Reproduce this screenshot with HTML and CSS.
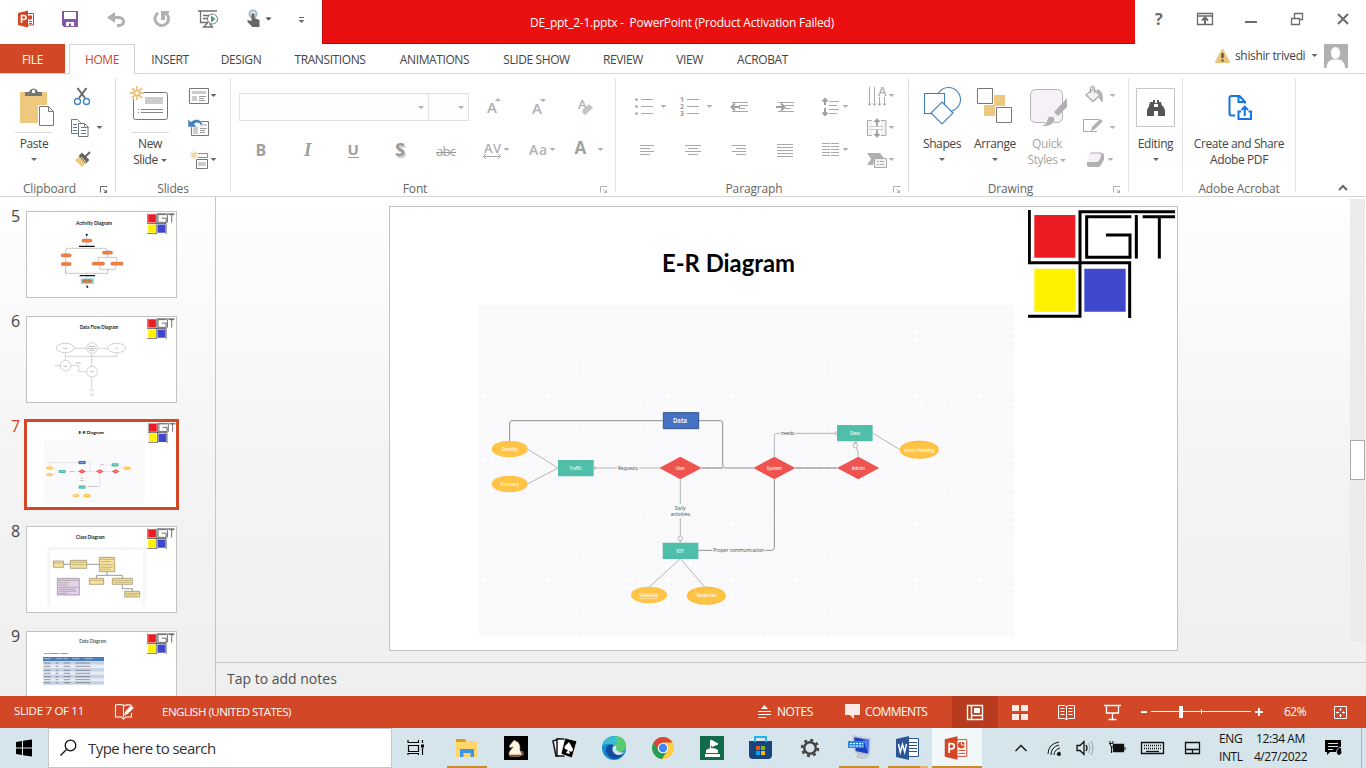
FILE: index.html
```html
<!DOCTYPE html>
<html lang="en">
<head>
<meta charset="utf-8">
<title>DE_ppt_2-1.pptx - PowerPoint</title>
<link rel="stylesheet" href="styles.css">
</head>
<body>
<svg class="defs" width="0" height="0">
  <defs>
    <path id="dd" d="M0 0h6l-3 3z"/>
    <path id="star" d="M0-7V-3M0 3V7M-7 0H-3M3 0H7M-5-5L-2-2M2 2L5 5M5-5L2-2M-2 2L-5 5M-2.500 0a2.500 2.500 0 1 0 5 0a2.500 2.500 0 1 0-5 0" fill="none" stroke="#ecc57c" stroke-width="1.800"/>
    <g id="launch" fill="none" stroke="currentColor"><path d="M.5 6.500V.5H7M3.500 3.500L6 6"/><path d="M7 3.500V7H3.500z" fill="currentColor" stroke="none"/></g>
    <pattern id="dots" x="1004" y="307" width="7.080" height="7.080" patternUnits="userSpaceOnUse"><circle cx=".8" cy=".8" r=".7" fill="#efeff3"/></pattern>
    <symbol id="logo" viewBox="84 30 441 323" preserveAspectRatio="none">
      <path d="M103 45h123v128H103z" fill="#ed1c24"/><path d="M103 206h124v128H103z" fill="#fff200"/><path d="M253 206h124v128H253z" fill="#3f48cc"/>
      <path d="M88 30V188H389V353M84 348H240V35H525M394 50H260V171H390V105H318M409 45V175M428 50H525M478 50V175" fill="none" stroke="#000" stroke-width="9"/>
    </symbol>
    <symbol id="er" viewBox="390 207 787 443">
      <rect x="390" y="207" width="787" height="443" fill="#fff"/>
      <text x="662" y="272" textLength="133" lengthAdjust="spacingAndGlyphs" class="slide-title">E-R Diagram</text>
      <rect x="478" y="305" width="536" height="331" fill="#fafafc"/><rect x="478" y="305" width="536" height="331" fill="url(#dots)"/>
      <g transform="translate(470 395) scale(.33333)">
        <g fill="none" stroke="#b5b5b5" stroke-width="3">
          <path d="M172 162L264 219L172 267M371 219H441M507 219H570M375 213V225M631 253V327M631 369V424M631 436V443M626 437H636M631 491L537 577M631 491L705 577M913 185V122Q913 115 920 115H930M975 115H1100M1097 109V121M1209 115L1290 164M1156 140V146M1151 143H1161M1158 158Q1165 166 1165 185"/>
          <circle cx="631" cy="430" r="6.500" fill="#fff"/><circle cx="1156" cy="152" r="6.500" fill="#fff"/>
          <path stroke="#8f8f8f" d="M119 138V84Q119 77 127 77H578M687 77H751Q758 77 758 85V211Q758 219 766 219H851M684 466H727M885 466H905Q913 466 913 458V253"/>
          <path stroke="#a0a0a0" stroke-width="4" d="M695 219H758M976 219H1101"/>
        </g>
        <g fill="#ffc446"><ellipse cx="119" cy="162" rx="54" ry="25"/><ellipse cx="119" cy="267" rx="54" ry="25"/><ellipse cx="537" cy="600" rx="54" ry="25"/><g stroke="#ffbc38" stroke-width="5"><ellipse cx="709" cy="602" rx="56" ry="25"/><ellipse cx="1348" cy="164" rx="56" ry="25"/></g></g>
        <g fill="#50bfa9"><path d="M264 195h107v49H264zM578 443h107v49H578zM1101 90h107v49H1101z"/></g>
        <g fill="#ef5350"><path d="M568 219L631 185L695 219L631 253zM850 219L913 185L976 219L913 253zM1101 219L1165 185L1228 219L1165 253z"/></g>
        <path d="M580 53h106v48H580z" fill="#4472c4" stroke="#2f528f" stroke-width="3"/>
        <g class="node-text">
          <text x="630" y="84" class="node-main" textLength="42" lengthAdjust="spacingAndGlyphs">Data</text>
          <text x="119" y="167" textLength="48" lengthAdjust="spacingAndGlyphs">Density</text><text x="119" y="272" textLength="56" lengthAdjust="spacingAndGlyphs">Accuracy</text><text x="317" y="224" textLength="38" lengthAdjust="spacingAndGlyphs">Traffic</text>
          <text x="631" y="224" textLength="28" lengthAdjust="spacingAndGlyphs">User</text><text x="913" y="224" textLength="45" lengthAdjust="spacingAndGlyphs">System</text><text x="1165" y="224" textLength="40" lengthAdjust="spacingAndGlyphs">Admin</text>
          <text x="1155" y="120" textLength="30" lengthAdjust="spacingAndGlyphs">Data</text><text x="631" y="473" textLength="24" lengthAdjust="spacingAndGlyphs">IOT</text><text x="536" y="606" textLength="56" lengthAdjust="spacingAndGlyphs" text-decoration="underline">Schedule</text><text x="709" y="607" textLength="58" lengthAdjust="spacingAndGlyphs">Response</text><text x="1348" y="170" textLength="90" lengthAdjust="spacingAndGlyphs">error checking</text>
        </g>
        <g class="edge-text">
          <text x="474" y="224" textLength="60" lengthAdjust="spacingAndGlyphs">Requests</text><text x="631" y="345" textLength="32" lengthAdjust="spacingAndGlyphs">Daily</text><text x="631" y="362" textLength="58" lengthAdjust="spacingAndGlyphs">activities</text><text x="806" y="472" textLength="152" lengthAdjust="spacingAndGlyphs">Proper communication</text><text x="953" y="120" textLength="40" lengthAdjust="spacingAndGlyphs">needs</text>
        </g>
      </g>
      <use href="#logo" x="1028" y="210" width="147" height="108"/>
    </symbol>
  </defs>
</svg>

<div class="app">
<header class="titlebar">
  <div class="qat">
    <svg width="50" height="44" viewBox="0 0 50 44"><path d="M18 13L28 10.500V27.500L18 25z" fill="#d24726"/><path d="M28 13.500h5.500v11.500H28M29 21.500h3M29 23.500h3" fill="none" stroke="#d24726"/><circle cx="30" cy="17.500" r="2.300" fill="#d24726"/><path d="M21.500 23V15.500h2.500a2 2 0 0 1 0 4h-2.500" fill="none" stroke="#fff" stroke-width="1.600"/></svg>
    <svg width="43" height="44" viewBox="50 0 43 44"><path d="M62 11h16v16H64l-2-2z" fill="#8457a8"/><path d="M64 12h12v7H64z" fill="#fff"/><path d="M66 22h8v4h-3v-2.500h-2V26h-3z" fill="#fff"/></svg>
    <svg width="46" height="44" viewBox="93 0 46 44"><path d="M109 17.500H119C125 17.500 125 25.500 119 25.500H117" fill="none" stroke="#b1b1b1" stroke-width="3"/><path d="M107 17.500L115 12V23z" fill="#b1b1b1"/></svg>
    <svg width="46" height="44" viewBox="139 0 46 44"><path d="M158 13a6.800 6.800 0 1 0 7-.3" fill="none" stroke="#b1b1b1" stroke-width="3"/><path d="M161 11h8v2h-4v7h-4z" fill="#b1b1b1"/></svg>
    <svg width="47" height="44" viewBox="185 0 47 44"><path d="M198 11h19M200.500 11v11.500h8M203 15.500h7M203 18.500h5M207.500 23l-4 4h9l-3-3.500" fill="none" stroke="#6f6f6f" stroke-width="1.300"/><circle cx="212.500" cy="19" r="5" fill="#fff" stroke="#777"/><path d="M211 15.500l4.500 3.500-4.500 3.500z" fill="#3fa27d"/></svg>
    <svg width="48" height="44" viewBox="232 0 48 44"><circle cx="253" cy="14" r="3.500" fill="none" stroke="#9bbbd5" stroke-width="2"/><path d="M251.500 14q1.500-2 3 0v4l5 2v7h-7l-5-5v-2l4 1z" fill="#666"/><use href="#dd" x="265.500" y="17.500" fill="#444"/></svg>
    <svg width="42" height="44" viewBox="280 0 42 44"><path d="M299 17.500h5" stroke="#666"/><use href="#dd" x="298.500" y="20" fill="#666"/></svg>
  </div>
  <div class="caption"><span>DE_ppt_2-1.pptx -&nbsp; PowerPoint (Product Activation Failed)</span></div>
  <div class="winctl">
    <svg width="231" height="44" viewBox="1135 0 231 44" fill="none" stroke="#6b6b6b" stroke-width="1.300"><text x="1155" y="25" fill="#6b6b6b" stroke="none" class="help">?</text><path d="M1197.500 13.500h15v11h-15zM1197.500 16h15"/><path d="M1205 24v-6M1202 20.500l3-3 3 3" stroke-width="2"/><path d="M1245 22h12" stroke-width="2"/><path d="M1291.500 18.500h8v6h-8zM1294.500 18v-4.500h8v6h-3"/><path d="M1338 14l10 10M1348 14l-10 10" stroke-width="2"/></svg>
  </div>
</header>

<nav class="tabs">
  <b class="file">FILE</b><b class="home">HOME</b><b class="insert">INSERT</b><b>DESIGN</b><b>TRANSITIONS</b><b>ANIMATIONS</b><b>SLIDE SHOW</b><b>REVIEW</b><b>VIEW</b><b>ACROBAT</b>
  <div class="account">
    <svg width="20" height="24" viewBox="1213 44 20 24"><path d="M1222.500 50l6.500 12h-13z" fill="#ecc57c" stroke="#ecc57c" stroke-linejoin="round" stroke-width="2"/><path d="M1222.500 53v5M1222.500 59.500v2" stroke="#444" stroke-width="2"/></svg>
    <span>shishir trivedi</span>
    <svg width="54" height="29" viewBox="1306 44 54 29"><use href="#dd" x="1311.500" y="54" fill="#666"/><path d="M1324 44h24v24h-24z" fill="#b1b1b1"/><ellipse cx="1335.500" cy="53" rx="4.700" ry="6" fill="#fff"/><path d="M1326.500 68q0-7 6-8.500h6.500q6 1.500 6 8.500z" fill="#fff"/></svg>
  </div>
</nav>

<section class="ribbon">
  <div class="group g-clip">
    <div class="body">
      <div class="big paste"><svg width="65" height="55" viewBox="0 78 65 55"><path d="M20 92h27v31H20z" fill="#edc87e"/><path d="M25 96v-4h4l1-2q3.500-3 7 0l1 2h4v4z" fill="#777"/><path d="M32 90h3v3h-3z" fill="#fff"/><path d="M38 105h16v22H38z" fill="#fff"/><path d="M39.500 106.500h9l5 5v14h-14zM48.500 106.500v5h5" fill="#fff" stroke="#777"/><path d="M15 132.500h38" stroke="#dcdcdc"/></svg><p>Paste</p><svg class="arrow" width="6" height="3" fill="#666"><use href="#dd"/></svg></div>
      <div class="col">
        <svg width="50" height="34" viewBox="65 78 50 34"><path d="M77.500 88l7.500 10M86.500 88L79 98" stroke="#666" stroke-width="2"/><g fill="none" stroke="#4180bb" stroke-width="1.300"><circle cx="77.500" cy="101.500" r="3"/><circle cx="86.500" cy="101.500" r="3"/></g></svg>
        <svg width="50" height="34" viewBox="65 112 50 34"><g fill="#fff" stroke="#777"><path d="M71.500 119.500h6l3 3v11h-9z"/><path d="M78.500 123.500h6l3.500 3.500v9.500h-9.500zM84.500 123.500v4h4"/></g><path d="M73 124.500h4M73 127.500h4M73 130.500h4M81 127.500h3M81 130.500h5M81 133.500h5" stroke="#4180bb"/><use href="#dd" x="96.500" y="126" fill="#666"/></svg>
        <svg width="50" height="34" viewBox="65 146 50 34"><path d="M80 156l7 6-5 5-7-7z" fill="#edc87e"/><path d="M82 154l6 6-2 2-6-6zM85 157l5-5" stroke="#666" stroke-width="2" fill="#666"/><path d="M81 157l5 5" stroke="#fff" stroke-width=".8"/></svg>
      </div>
    </div>
    <div class="label"><span>Clipboard</span><svg width="16" height="16"><use href="#launch" x="1" y="6"/></svg></div>
  </div>

  <div class="group g-slides">
    <div class="body">
      <div class="big"><svg width="68" height="55" viewBox="116 78 68 55"><rect x="133.500" y="92.500" width="34" height="27" rx="2" fill="#fff" stroke="#777"/><path d="M145 97h18v7h-18z" fill="#ccc"/><path d="M141 109.500h22M141 112.500h22M138 109.500h1M138 112.500h1" stroke="#888"/><circle cx="137" cy="93" r="7" fill="#fff"/><use href="#star" x="137" y="93"/><path d="M131 132.500h38" stroke="#dcdcdc"/></svg><p>New</p><p>Slide <svg class="inl" width="6" height="7" fill="#666"><use href="#dd"/></svg></p></div>
      <div class="col">
        <svg width="46" height="34" viewBox="184 78 46 34"><path d="M189.500 88.500h19v15h-19z" fill="#fff" stroke="#777"/><path d="M192 91h14v3h-14zM192 96h5v5h-5z" fill="#ccc"/><path d="M199 96.500h7M199 98.500h5M199 100.500h6" stroke="#999"/><use href="#dd" x="210.500" y="94" fill="#666"/></svg>
        <svg width="46" height="34" viewBox="184 112 46 34"><path d="M191.500 121.500h17v14h-17z" fill="#fff" stroke="#777"/><path d="M193 127h5v7h-5zM200 124h7v2h-7z" fill="#ccc"/><path d="M200 128.500h7M200 130.500h5M200 132.500h5" stroke="#999"/><path d="M188 119v8h9l-3-3q4-3 7 1h2q-2-6-7-5.500-3 0-5 2.500z" fill="#4180bb" stroke="#fff" stroke-width=".5"/></svg>
        <svg width="46" height="34" viewBox="184 146 46 34"><path d="M198 153.500h9.500v4H198" fill="none" stroke="#dd7a30"/><path d="M196.500 159.500h11v9h-11z" fill="#fff" stroke="#777"/><path d="M198 162h8v4h-8z" fill="#ccc"/><use href="#star" transform="translate(194 155) scale(.55)"/><use href="#dd" x="210.500" y="158" fill="#666"/></svg>
      </div>
    </div>
    <div class="label"><span>Slides</span></div>
  </div>

  <div class="group g-font off">
    <div class="body rows">
      <div class="row r1">
        <div class="combo c1"><svg width="6" height="3"><use href="#dd"/></svg></div><div class="combo c2"><svg width="6" height="3"><use href="#dd"/></svg></div>
        <svg width="46" height="51" viewBox="470 78 46 51"><text x="487" y="113" font-size="15" font-weight="600">A</text><path d="M495 101l3-3 3 3z"/></svg>
        <svg width="46" height="51" viewBox="516 78 46 51"><text x="532" y="114" font-size="15" font-weight="600">A</text><use href="#dd" x="540" y="99"/></svg>
        <svg width="46" height="51" viewBox="562 78 46 51"><text x="578" y="109" font-size="13" font-weight="600">A</text><path d="M589 104l4 4-7 6-4-4z" fill="#c4c4c4"/><path d="M582 112l3 3 2-1-4-4z" fill="#c4c4c4"/></svg>
      </div>
      <div class="row r2">
        <svg width="46" height="51" viewBox="238 129 46 51"><text x="255.500" y="156" font-size="16" font-weight="700" fill="#a0a0a0">B</text></svg>
        <svg width="46" height="51" viewBox="284 129 46 51"><text x="304" y="156" font-size="19" font-weight="700" fill="#a0a0a0" font-style="italic" font-family="Liberation Serif">I</text></svg>
        <svg width="46" height="51" viewBox="330 129 46 51"><text x="347.500" y="155" font-size="15" font-weight="700" fill="#a0a0a0">U</text><path d="M348 157.500h11" stroke="#a0a0a0"/></svg>
        <svg width="46" height="51" viewBox="376 129 46 51"><text x="396.500" y="157.500" font-size="18" font-weight="700" fill="#ccc">S</text><text x="395" y="156" font-size="18" font-weight="700" fill="#999">S</text></svg>
        <svg width="46" height="51" viewBox="422 129 46 51"><text x="436" y="156" font-size="13" textLength="20" fill="#a0a0a0">abc</text><path d="M436 152.500h20" stroke="#999"/></svg>
        <svg width="46" height="51" viewBox="468 129 46 51"><text x="484" y="153" font-size="13" font-weight="600" textLength="17">AV</text><path d="M484 156.500h16M486 154l-2.500 2.500 2.500 2.500M498 154l2.500 2.500-2.500 2.500" fill="none" stroke="#aaa"/><use href="#dd" x="503.500" y="148"/></svg>
        <svg width="46" height="51" viewBox="514 129 46 51"><text x="529" y="155" font-size="14" font-weight="600" textLength="18">Aa</text><use href="#dd" x="549.500" y="148"/></svg>
        <svg width="50" height="51" viewBox="560 129 50 51"><text x="574.500" y="154" font-size="17" font-weight="700" fill="#a0a0a0">A</text><use href="#dd" x="597.500" y="148"/></svg>
      </div>
    </div>
    <div class="label"><span>Font</span><svg width="16" height="16"><use href="#launch" x="1" y="6"/></svg></div>
  </div>

  <div class="group g-para off">
    <div class="body">
      <svg width="46" height="102" viewBox="624 78 46 102"><g fill="none" stroke="#a8a8a8"><path d="M641 99.500h12M641 106.500h12M641 113.500h12M640 145.500h14M640 148.500h10M640 151.500h14M640 154.500h10"/></g><circle cx="636.500" cy="99.500" r="1.500"/><circle cx="636.500" cy="106.500" r="1.500"/><circle cx="636.500" cy="113.500" r="1.500"/><use href="#dd" x="660.500" y="105"/></svg>
      <svg width="46" height="102" viewBox="670 78 46 102"><path d="M687 99.500h12M687 106.500h12M687 113.500h12M685 145.500h16M688 148.500h10M685 151.500h16M688 154.500h10" stroke="#a8a8a8"/><g font-size="7" font-weight="700" fill="#999"><text x="680" y="102">1</text><text x="680" y="109">2</text><text x="680" y="116">3</text></g><use href="#dd" x="706.500" y="105"/></svg>
      <svg width="46" height="102" viewBox="716 78 46 102"><path d="M732 102.500h16M739 105.500h9M739 108.500h6M732 111.500h16M732 145.500h14M736 148.500h10M732 151.500h14M736 154.500h10" stroke="#a8a8a8"/><path d="M740 107h-8M735 103.500l-3.500 3.500 3.500 3.500" fill="none" stroke="#a0a0a0" stroke-width="2"/></svg>
      <svg width="46" height="102" viewBox="762 78 46 102"><path d="M778 102.500h16M785 105.500h9M785 108.500h6M778 111.500h16M777 144.500h16M777 147.500h16M777 150.500h16M777 153.500h16M777 156.500h16" stroke="#a8a8a8"/><path d="M776 107h8M781 103.500l3.500 3.500-3.500 3.500" fill="none" stroke="#a0a0a0" stroke-width="2"/></svg>
      <svg width="48" height="102" viewBox="808 78 48 102"><path d="M829 101.500h10M829 105.500h8M829 109.500h10M829 113.500h8M822 143.500h8M831 143.500h8M822 146.500h8M831 146.500h8M822 149.500h8M831 149.500h8M822 152.500h8M831 152.500h8M822 155.500h8M831 155.500h8" stroke="#a8a8a8"/><path d="M825 99v6M825 108v7M822.500 101.500l2.500-2.500 2.500 2.500M822.500 112.500l2.500 2.500 2.500-2.500" fill="none" stroke="#a0a0a0" stroke-width="2"/><use href="#dd" x="842.500" y="105"/><use href="#dd" x="842.500" y="148"/></svg>
      <div class="col">
        <svg width="44" height="34" viewBox="858 78 44 34"><path d="M869.500 87v18M874.500 87v18M879.500 97v8M884.500 97v8M868 103.500l1.500 2 1.500-2M873 103.500l1.500 2 1.500-2M878 103.500l1.500 2 1.500-2M883 103.500l1.500 2 1.500-2" fill="none" stroke="#aaa"/><text x="878" y="96" font-size="13" font-weight="600">A</text><use href="#dd" x="888.500" y="94"/></svg>
        <svg width="44" height="34" viewBox="858 112 44 34"><path d="M872 120.500h-4.500v15h4.500M881 120.500h5v15h-5" fill="#f5f1f6" stroke="#aaa"/><path d="M870 126.500h14M870 129.500h14" stroke="#ccc"/><path d="M877 126v-6M877 130v6M874.500 122l2.500-2.500 2.500 2.500M874.500 134l2.500 2.500 2.500-2.500" fill="none" stroke="#a0a0a0" stroke-width="1.800"/><use href="#dd" x="888.500" y="126"/></svg>
        <svg width="44" height="34" viewBox="858 146 44 34"><path d="M867 153h13l4 5h-9l-2 7h-6l4-6z"/><path d="M874.500 158.500h12v9h-12z" fill="#f5f1f6" stroke="#aaa"/><path d="M877 161.500h2M880 161.500h4M877 164.500h2M880 164.500h4" stroke="#aaa"/><use href="#dd" x="888.500" y="158"/></svg>
      </div>
    </div>
    <div class="label"><span>Paragraph</span><svg width="16" height="16"><use href="#launch" x="1" y="6"/></svg></div>
  </div>

  <div class="group g-draw">
    <div class="body">
      <div class="big"><svg width="60" height="55" viewBox="912 78 60 55"><g fill="#fff" stroke="#4180bb" stroke-width="1.100"><circle cx="948.500" cy="99.500" r="12"/><path d="M924.500 93.500h20v20h-20z"/><path d="M942 102l11 11-11 11-11-11z"/></g></svg><p>Shapes</p><svg class="arrow" width="6" height="3" fill="#666"><use href="#dd"/></svg></div>
      <div class="big"><svg width="46" height="55" viewBox="972 78 46 55"><path d="M994 95h11v11h-11zM984 105h11v11h-11z" fill="#edc87e"/><g fill="#fff" stroke="#777"><path d="M977.500 88.500h15v15h-15zM996.500 107.500h15v15h-15z"/></g></svg><p>Arrange</p><svg class="arrow" width="6" height="3" fill="#666"><use href="#dd"/></svg></div>
      <div class="big off"><svg width="58" height="55" viewBox="1018 78 58 55"><rect x="1030.500" y="89.500" width="32" height="33" rx="5" fill="#f5f1f7" stroke="#b5b5b5"/><path d="M1067 98v9l-9 9-4-4z"/><path d="M1040 126q6-1 7-6 1-5 6-3.500 4 3 0 7-5 4-13 2.500z" stroke="#fff" stroke-width=".7"/></svg><p>Quick</p><p>Styles <svg class="inl" width="6" height="7"><use href="#dd"/></svg></p></div>
      <div class="col off">
        <svg width="52" height="34" viewBox="1076 78 52 34"><path d="M1093 89l7 6-7 6.500-7-6.500z" fill="#f5f1f7" stroke="#aaa" stroke-width="1.300"/><path d="M1097 90q6 1 5 11l-3-4M1090.500 93v-5q2-3 4 0v5" fill="none" stroke="#aaa" stroke-width="1.300"/><path d="M1096 90l6 4v7l-3-6z"/><use href="#dd" x="1109.500" y="94"/></svg>
        <svg width="52" height="34" viewBox="1076 112 52 34"><path d="M1099 119.500h-15.500v12h5M1097 131.500h-8" fill="none" stroke="#aaa"/><path d="M1091 131l1-4 8-8 3 2-8 8z"/><use href="#dd" x="1109.500" y="126"/></svg>
        <svg width="52" height="34" viewBox="1076 146 52 34"><path d="M1091 152.500h9q4 0 4 3v4l-3 5.500q-1 2-3 2h-8q-4 0-3-4z"/><path d="M1092 153.500h7q3 0 2 3l-2 4q-1 1.500-3 1.500h-7q-2 0-1-2l2-5q1-1.500 2-1.500z" fill="#f5f1f7"/><use href="#dd" x="1107.500" y="158"/></svg>
      </div>
    </div>
    <div class="label"><span>Drawing</span><svg class="off" width="16" height="16"><use href="#launch" x="1" y="6"/></svg></div>
  </div>

  <div class="group g-edit">
    <div class="body"><div class="big"><svg width="53" height="55" viewBox="1129 78 53 55"><path d="M1136.500 88.500h38v38h-38z" fill="none" stroke="#c6c6c6"/><path d="M1150 102h3v-2h2v3h2v-3h2v2h2l1 4h-4v-2h-4v2h-5zM1149 106h5v10h-7v-6zM1158 106h5l2 4v6h-7zM1154 107h4v4h-4z" fill="#555"/></svg><p>Editing</p><svg class="arrow" width="6" height="3" fill="#666"><use href="#dd"/></svg></div></div>
  </div>
  <div class="group g-pdf">
    <div class="body"><div class="big"><svg width="112" height="55" viewBox="1183 78 112 55"><path d="M1235 115.500h-3.500q-2 0-2-2v-15.500q0-2 2-2h8l5.500 6v1.500M1238.500 96v6h6" fill="none" stroke="#1473e6" stroke-width="2"/><path d="M1241 111.500h-2.500v7.500h12.500v-7.500h-2.500M1244.750 116v-9M1241.500 110l3.250-3.250 3.250 3.250" fill="none" stroke="#1473e6" stroke-width="2"/></svg><p>Create and Share</p><p>Adobe PDF</p></div></div>
    <div class="label"><span>Adobe Acrobat</span></div>
  </div>
  <div class="collapse"><svg width="12" height="8"><path d="M2 6l4-4 4 4" fill="none" stroke="#666" stroke-width="2"/></svg></div>
</section>

<main class="work">
  <aside class="thumbs">
    <div class="item"><i>5</i><div class="thumb"><svg width="149" height="85" viewBox="81 42 447 255"><text x="282" y="81" class="tt" textLength="108" lengthAdjust="spacingAndGlyphs">Activity Diagram</text>
      <path d="M260 108V145M197 230V158Q197 151 205 151H315Q323 151 323 160V178M260 264V226H205Q197 226 197 218M323 212V226H260M295 190V178H350V190M299 203V214H347V203" fill="none" stroke="#aaa" stroke-width="2"/><path d="M237 145H284M239 233H285" stroke="#111" stroke-width="4"/><g fill="#f08040" stroke="#b86a45"><rect x="245" y="123" width="31" height="10" rx="5"/><rect x="183" y="167" width="31" height="10" rx="5"/><rect x="183" y="193" width="31" height="10" rx="5"/><rect x="307" y="159" width="31" height="10" rx="5"/><rect x="276" y="192" width="38" height="10" rx="5"/><rect x="332" y="192" width="38" height="10" rx="5"/></g><path d="M242 241h40v17h-40z" fill="#8be0e8"/><rect x="246" y="244" width="31" height="10" rx="5" fill="#c87848"/><circle cx="260" cy="110" r="3"/><circle cx="262" cy="266" r="3"/><use href="#logo" x="441" y="46" width="83" height="62"/></svg></div></div>
    <div class="item"><i>6</i><div class="thumb"><svg width="149" height="85" viewBox="81 357 447 255"><text x="297" y="392" class="tt" textLength="116" lengthAdjust="spacingAndGlyphs">Data Flow Diagram</text>
      <g fill="#fff" stroke="#a5a5a5" stroke-width="1.500"><path d="M222 451H262M292 451H323M196 464V488M196 475H350V464M275 466V507M212 503H236V521H261M163 503H181M275 537V570M271 580L276 573L281 580M271 595L276 586L281 595" fill="none"/><ellipse cx="196" cy="450" rx="27" ry="14"/><ellipse cx="350" cy="450" rx="27" ry="14"/><circle cx="276" cy="450" r="16"/><circle cx="197" cy="503" r="16"/><circle cx="276" cy="521" r="16"/></g><path d="M190 451h12M266 445h20M265 451h22M268 457h16M191 505h10M270 521h12M228 495h14M347 451h6" stroke="#777" stroke-width="2" stroke-dasharray="3 1"/><use href="#logo" x="441" y="361" width="83" height="62"/></svg></div></div>
    <div class="item active"><i>7</i><div class="thumb"><svg width="149" height="84" viewBox="0 0 149 84"><use href="#er" width="149" height="84"/></svg></div></div>
    <div class="item"><i>8</i><div class="thumb"><svg width="149" height="85" viewBox="81 237 447 255"><text x="271" y="273" class="tt" textLength="86" lengthAdjust="spacingAndGlyphs">Class Diagram</text>
      <path d="M146 474V302H433V474" fill="none" stroke="#f5f5f5" stroke-width="8"/><path d="M191 349H211M260 349H298M321 372V382M290 391V382H367V391M367 410V422H397V430" fill="none" stroke="#666" stroke-width="2"/><g fill="#f6e29a" stroke="#94845a" stroke-width="2"><path d="M160 339h31v19h-31zM211 337h49v24h-49zM298 328h46v43h-46zM268 391h43v18h-43zM337 391h60v18h-60zM374 430h45v17h-45z"/><path d="M172 391h66v50h-66z" fill="#e2d1e8" stroke="#8b7b92"/></g><path d="M162 345h27M213 343h45M215 350h40M300 334h42M302 341h30M302 350h38M302 358h35M302 364h30M270 397h39M339 397h56M342 403h50M376 436h41M378 441h35M174 397h62M176 404h30M176 411h26M174 418h62M176 424h50M176 430h52M176 436h25" stroke="#8d8063" stroke-width="2" opacity=".7"/><use href="#logo" x="441" y="241" width="83" height="62"/></svg></div></div>
    <div class="item"><i>9</i><div class="thumb"><svg width="149" height="85" viewBox="81 552 447 255"><text x="278" y="584" class="tt light" textLength="81" lengthAdjust="spacingAndGlyphs">Data Diagram</text><text x="168" y="618" class="small" textLength="72" lengthAdjust="spacingAndGlyphs">For FeedBack website</text>
      <path d="M129 627h183v12H129z" fill="#4a7ebb"/><path d="M129 639h183v72H129z" fill="#e9edf4"/><path d="M129 644.500h183M129 665.500h183M129 685.500h183M129 704.500h183" stroke="#c5d1e5" stroke-width="10"/><path d="M132 645h180M132 655h180M132 667h180M132 676h180M132 686h180M132 695h180M132 704h180" stroke="#59606b" stroke-width="3" stroke-dasharray="20 15 8 16 20 15 45 50" opacity=".6"/><path d="M131 632h22M167 632h20M191 632h12M216 632h22M254 632h24" stroke="#fff" stroke-width="2" opacity=".7"/><use href="#logo" x="441" y="556" width="83" height="62"/></svg></div></div>
  </aside>
  <section class="editor">
    <div class="canvas"><div class="slide"><svg width="787" height="443" viewBox="0 0 787 443"><use href="#er" width="787" height="443"/></svg></div>
      <div class="scroll"><div class="knob"></div></div></div>
    <div class="notes"><span>Tap to add notes</span></div>
  </section>
</main>

<footer class="status">
  <span class="s1">SLIDE 7 OF 11</span>
  <svg width="54" height="32" viewBox="108 696 54 32" fill="none" stroke="#fff" stroke-width="1.100"><path d="M123.500 717V705q-4-1-8 0v12h6l2 2 2-2h6v-4M123.500 706q3-1.500 6-1h2M125 714.500l1-3 5-5.500 2 2-5.500 5z"/><path d="M126 714l6-7" stroke-width="2"/></svg>
  <span class="s2">ENGLISH (UNITED STATES)</span>
  <svg width="20" height="32" viewBox="757 696 20 32"><path d="M758 711.500h13M758 714.500h13M758 717.500h8" stroke="#fff" stroke-width="1.200"/><path d="M761 709l3.500-4 3.500 4z" fill="#fff"/></svg><span class="s3">NOTES</span>
  <svg width="20" height="32" viewBox="845 696 20 32"><path d="M845 704h15v11h-6v4l-4-4h-5z" fill="#fceae5"/></svg><span class="s4">COMMENTS</span>
  <div class="view on"><svg width="46" height="32" viewBox="952 696 46 32"><path d="M967.500 705.500h15v14h-15zM971.500 705v15M972 715.500h11" fill="none" stroke="#fff" stroke-width="1.400"/><path d="M974 708h6v5h-6z" fill="#fff"/></svg></div>
  <svg width="44" height="32" viewBox="998 696 44 32"><path d="M1012 705h7v6h-7zM1021 705h7v6h-7zM1012 714h7v6h-7zM1021 714h7v6h-7z" fill="#fceae5"/></svg>
  <svg width="46" height="32" viewBox="1042 696 46 32" fill="none" stroke="#fff"><path d="M1058.500 705.500h6l2 1 2-1h6v13h-6l-2 1-2-1h-6zM1066.500 706v14M1060.500 708.500h4M1060.500 711.500h4M1060.500 714.500h4M1068.500 708.500h4M1068.500 711.500h4M1068.500 714.500h4"/></svg>
  <svg width="48" height="32" viewBox="1088 696 48 32" fill="none" stroke="#fff" stroke-width="1.300"><path d="M1104 705.500h17M1106.500 706v7h12v-7M1112.500 713v6M1108.500 719.500h8"/></svg>
  <svg width="136" height="32" viewBox="1136 696 136 32" stroke="#fff"><path d="M1141 712h6M1255 712h8M1259 708v8" stroke-width="2"/><path d="M1151 711.500h100M1201.500 709v5"/><path d="M1181 706v12" stroke-width="4"/></svg>
  <span class="s5">62%</span>
  <svg width="44" height="32" viewBox="1322 696 44 32" fill="none" stroke="#fff"><path d="M1334.500 706.500h12v12h-12z"/><path d="M1340.500 708v3M1340.500 714v3M1336 712.500h3M1342 712.500h3M1339.500 709.500h2M1339.500 715.500h2M1337.500 711.500v2M1343.500 711.500v2"/></svg>
</footer>

<footer class="taskbar">
  <svg width="48" height="40" viewBox="0 728 48 40"><path d="M16 742l6-1v6.500h-6zM23 740.800l9-1.200v8h-9zM16 748.500h6v6.500l-6-1zM23 748.500h9v8l-9-1.200z"/></svg>
  <div class="search"><svg width="39" height="38" viewBox="49 729 39 38" fill="none" stroke="#111" stroke-width="1.300"><circle cx="70.500" cy="745.500" r="5.300"/><path d="M66.500 749.500l-6 6"/></svg><span>Type here to search</span></div>
  <svg width="50" height="40" viewBox="392 728 50 40" fill="none" stroke="#000" stroke-width="1.200"><path d="M408 740v2.500h10.500V740M408.500 745.500h10v6h-10zM408 755v-1.500h10.500v1.500M422.500 740v3M422.500 748v7"/><path d="M421 744.500h3v3h-3z" fill="#000" stroke="none"/></svg>
  <div class="task run"><svg viewBox="442 728 49 40"><path d="M456 739h9l2 2h10v16h-21z" fill="#ffd667"/><path d="M456 739h9l1 3h-10z" fill="#dda01b"/><path d="M460 757v-8h14v8h-3.500v-4h-7v4z" fill="#3d95e6"/></svg></div>
  <div class="task"><svg viewBox="491 728 49 40"><path d="M504 736h24v24h-24z"/><path d="M508 754l4-3h11l1 4-5 2h-9z" fill="#8a5e35"/><path d="M509 755v-3l4-5-3 1-1-2 5-6 2 1q5 2 4 9l1 2 1 3z" fill="#fff5e3" stroke="#4b3520" stroke-width=".5"/></svg></div>
  <div class="task"><svg viewBox="540 728 49 40"><g fill="#fff" stroke="#111" stroke-width="1.500"><path d="M553 741l6-2 2 16-5 1z"/><path d="M557 739h9l-2 17h-7z"/></g><path d="M565 738l12 3-5 17-11-4z" stroke="#fff" stroke-width=".7"/><path d="M569 742l4 7q0 4-4 2l1 3-4-1 2-3q-5-1-3-4z" fill="#fff"/></svg></div>
  <div class="task"><svg viewBox="589 728 49 40"><circle cx="614" cy="748" r="12" fill="#168ad2"/><path d="M602 746q3-10 13-10 10 1 11 10 0 5-6 6-6 0-5-5-5-6-13-1z" fill="#39bed0"/><path d="M616 736q10 1 10 10 0 5-6 6-6 0-5-5 3-6 1-11z" fill="#5bcb72"/><path d="M606 748q3-5 8-3-4 5 1 9 4 2 8 0-5 7-12 4-6-4-5-10z" fill="#134b9d"/><path d="M612.500 749q0-4 4-3-2 4 3 6 3 1 5-.5-3 4-7 3.500-5-2-5-6z" fill="#d6e5ec"/></svg></div>
  <div class="task"><svg viewBox="638 728 49 40"><circle cx="663" cy="748" r="11" fill="#ffcd42"/><path d="M653.500 742.500A11 11 0 0 1 672.500 742.500H663L657.500 751z" fill="#db4437"/><path d="M653.500 742.500A11 11 0 0 0 662 759L667.500 750.500L658 750.500z" fill="#239d58"/><circle cx="663" cy="748" r="5.300" fill="#fff"/><circle cx="663" cy="748" r="4.200" fill="#4285f4"/></svg></div>
  <div class="task"><svg viewBox="687 728 49 40"><path d="M700 736h24v24h-24z" fill="#126b4a"/><path d="M710.500 740v12M711 740l7 4-6 2.500z" fill="#fff" stroke="#fff"/><path d="M706 750q6-4 12 0v3h-12zM705 754h15v3h-15z" fill="#fff"/></svg></div>
  <div class="task"><svg viewBox="736 728 49 40"><path d="M749 741h23v14q0 4-4 4h-15q-4 0-4-4z" fill="#16467d"/><path d="M755 742v-5h11v5" fill="none" stroke="#21b5e9" stroke-width="2"/><path d="M756 746h4v4h-4z" fill="#f25022"/><path d="M761 746h4v4h-4z" fill="#7fba00"/><path d="M756 751h4v4h-4z" fill="#00a4ef"/><path d="M761 751h4v4h-4z" fill="#ffb900"/></svg></div>
  <div class="task"><svg viewBox="785 728 49 40"><circle cx="810" cy="748" r="5.800" fill="none" stroke="#444" stroke-width="2.500"/><circle cx="810" cy="748" r="8" fill="none" stroke="#444" stroke-width="2.500" stroke-dasharray="3 3.280"/></svg></div>
  <div class="task run"><svg viewBox="834 728 49 40"><path d="M853 736l17 3-1 16-14-3z" fill="#1741be" stroke="#c5cddd" stroke-width="1.800"/><path d="M863 739.500l6 1-1 12z" fill="#4d7aed"/><path d="M858 753l7 1 3 3q-6 3-11 0z" fill="#c9ccd3" stroke="#a9adb6" stroke-width=".5"/><path d="M848 741h16v7h-16z" fill="#328bd7"/><path d="M850 743.500h13M850 746h13" stroke="#fff" stroke-dasharray="2 1"/></svg></div>
  <div class="task run"><svg viewBox="883 728 49 40"><path d="M908 738.500h10.500v18H908" fill="#fff" stroke="#2b579a"/><path d="M909 742.500h8M909 745.500h8M909 748.500h8M909 751.500h8" stroke="#2b579a"/><path d="M896 739l13-3v24l-13-3z" fill="#2b579a"/><path d="M898.500 744l1.800 8 2.200-7.500 2.200 7.500 1.800-8" fill="none" stroke="#fff" stroke-width="1.500"/><path d="M920 766h8v2h-8z" fill="#e3b677"/></svg></div>
  <div class="task run sel"><svg viewBox="932 728 50 40"><path d="M957 739.500h10.500v17H957" fill="#fff" stroke="#d24726"/><circle cx="962" cy="745" r="3.500" fill="#d24726"/><path d="M962 745v-4M962 745h4" stroke="#fff"/><path d="M959 750.500h7M959 753.500h7" stroke="#d24726"/><path d="M945 739l13-3v24l-13-3z" fill="#d24726"/><path d="M949.500 753v-9.500h2.500a2.500 2.500 0 0 1 0 5.300h-2" fill="none" stroke="#fff" stroke-width="1.800"/></svg></div>
  <svg class="tray" width="230" height="40" viewBox="982 728 230 40" fill="none" stroke="#111" stroke-width="1.300"><path d="M1015.500 751l5.500-5.500 5.500 5.500"/><path d="M1048 754q0-10 11-12M1051 755q0-8 8-10M1054 755q0-5 6-7M1057 755q0-2 3-3" stroke-width="1"/><circle cx="1059" cy="754" r="1.300" fill="#111"/><path d="M1077 745.500h3l4-4v13l-4-4h-3zM1086 745q2 3 0 6"/><path d="M1088 743q4 5 0 10M1091 741q4 7 0 14" stroke="#8d999e" stroke-width="1"/><path d="M1113.500 744.500h10v7h-10z" fill="#111"/><path d="M1125 747v3M1109 743.500h4M1110 741v2M1113 741v2M1110 744q0 3 3 3M1111.500 747v6" stroke-width="1"/><path d="M1141.500 742.500h22v11h-22z"/><path d="M1144 745.500h18M1144 748.500h18" stroke-dasharray="1 1"/><path d="M1146 751.500h13"/><path d="M1185.500 742.500h14v11h-14zM1185 749.500h15M1192.500 750v4"/></svg>
  <div class="lang"><span>ENG</span><span>INTL</span></div>
  <div class="clock"><span>12:34 AM</span><span class="date">4/27/2022</span></div>
  <svg width="54" height="40" viewBox="1312 728 54 40"><path d="M1325 740h16v12h-11l-3 3v-3h-2z"/><path d="M1328 743.500h10M1328 746.500h10M1328 749.500h5" stroke="#d6e5ec"/><path d="M1340 747q-5 3-3 7 2 3 5-1l-1-6z" stroke="#d6e5ec" stroke-width=".8"/><path d="M1361.500 728v40" stroke="#aab5ba"/></svg>
</footer>
</div>
</body>
</html>
```
FILE: styles.css
```css
*{box-sizing:border-box}
body{margin:0;font-family:"Open Sans","Noto Sans",sans-serif;font-size:12px;color:#444;overflow:hidden}
.defs{position:absolute}
svg{display:block;flex:none}
p{margin:0}
.app{width:1366px;height:768px;display:flex;flex-direction:column;background:#fff}
.titlebar{display:flex;height:44px}
.qat{display:flex;width:322px}
.caption{width:813px;background:#ea1010;border-bottom:1px solid #c00a0a;border-left:1px solid #c00a0a;color:#fff;display:flex;justify-content:center;align-items:center;letter-spacing:-.23px;padding-right:94px;padding-top:2px;white-space:nowrap}
.help{font-size:16px;font-weight:700}
.tabs{height:30px;display:grid;grid-template-columns:65px 73px 68px 70px 108px 101px 103px 70px 63px 83px 1fr;border-bottom:1px solid #d4d4d4}
.tabs b{font-weight:400;text-align:center;line-height:31px;letter-spacing:-.4px;white-space:nowrap}
.tabs .file{background:#d24726;color:#fff;height:29px}
.tabs .home{color:#d24726;width:66px;margin-left:4px;height:30px;background:#fff;border:1px solid #d4d4d4;border-bottom:0;line-height:29px}
.tabs .insert{margin-right:4px}
.account{display:flex;justify-content:flex-end;padding-right:6px;line-height:24px}
.account span{width:73px;padding-left:2px;white-space:nowrap;letter-spacing:-.35px}
.ribbon{height:123px;display:flex;border-bottom:1px solid #d4d4d4;padding-top:4px}
.group{height:114px;border-right:1px solid #e1e1e1;display:flex;flex-direction:column}
.g-clip{width:116px}
.g-slides{width:115px}
.g-font{width:385px}
.g-para{width:293px}
.g-draw{width:220px}
.g-edit{width:54px}
.g-pdf{width:113px}
.body{display:flex;height:102px}
.g-para .body{padding-left:8px}
.g-draw .body{padding-left:3px}
.col{display:flex;flex-direction:column}
.g-para .col{margin-left:2px}
.rows{flex-direction:column}
.row{display:flex;height:51px}
.r1{padding-left:8px}
.r2{padding-left:7px}
.combo{height:28px;margin-top:15px;border:1px solid #e1e1e1;background:#fdfdfd;display:flex;justify-content:flex-end;align-items:center;padding-right:4px}
.c1{width:190px;margin-right:0}
.c2{width:40px;border-left:0;margin-right:1px}
.big{display:flex;flex-direction:column;align-items:center}
.big p{height:16px;line-height:22px;white-space:nowrap;letter-spacing:-.4px;display:flex;gap:3px}
.big .arrow{margin-top:9px}
.paste p,.paste .arrow{margin-left:3px}
.inl{margin-top:10px}
.label{display:flex;height:12px;line-height:17px;color:#666;letter-spacing:-.15px}
.label span{flex:1;text-align:center;white-space:nowrap}
.off{fill:#b1b1b1;color:#b1b1b1}
.off .label svg{color:#b1b1b1}
.big.off p{color:#a6a6a6}
.collapse{flex:1;display:flex;justify-content:flex-end;align-items:flex-end;padding:0 17px 4px 0}
.work{height:499px;display:flex;background:linear-gradient(#fff 0,#fdfdfd 30px,#f3f3f3 60%,#efefef 100%)}
.thumbs{width:216px;border-right:1px solid #c6c6c6;padding-top:14px;overflow:hidden}
.item{display:flex;height:105px}
.item i{font-style:normal;font-size:16px;width:26px;padding-left:11px;line-height:10px}
.thumb{width:151px;height:87px;border:1px solid #c3c3c3;background:#fff}
.active i{color:#d24726;width:24px}
.active .thumb{width:155px;height:91px;border:3px solid #d24726;margin-top:-2px}
.tt{font:700 14px Lato,sans-serif;text-anchor:middle;fill:#222}
.tt.light{font-weight:400}
.small{font:8px Lato,sans-serif;text-anchor:middle}
.slide-title{font:700 24px Lato,sans-serif;fill:#000}
.node-text{font:600 14px "Open Sans",sans-serif;fill:#fff;text-anchor:middle;opacity:.9}
.node-main{font-size:19px;font-weight:700}
.edge-text{font:14px "Open Sans",sans-serif;fill:#444;text-anchor:middle}
.editor{flex:1;display:flex;flex-direction:column}
.canvas{height:466px;display:flex;padding-left:173px;border-bottom:1px solid #c9c9c9}
.slide{width:789px;height:445px;border:1px solid #c3c3c3;margin-top:9px}
.scroll{width:15px;height:443px;margin:2px 0 0 172px;background:#ebebeb;padding-top:241px}
.knob{height:40px;border:1px solid #aaa;background:#fff}
.notes{flex:1;background:#efefef;font-size:14px;padding-left:11px;line-height:32px;letter-spacing:0;color:#505050}
.status{height:32px;background:#d24726;color:#fff;display:flex;line-height:31px;letter-spacing:-.5px;white-space:nowrap}
.s1{width:108px;padding-left:14px;font-size:11.500px;line-height:29px;letter-spacing:-.3px}
.s2{width:595px;font-size:11.500px}
.s3{width:68px}
.s4{width:87px;letter-spacing:-.65px}
.s5{width:50px;padding-left:12px}
.on{background:#b83b1d}
.taskbar{height:40px;background:#d6e5ec;display:flex;color:#111}
.search{width:344px;border:1px solid #c2c8cb;background:#fff;display:flex;align-items:center;font-size:15px;letter-spacing:-.55px;color:#333}
.task{width:49px;height:40px}
.task svg{width:49px;height:40px}
.sel{width:50px}
.run{background-image:linear-gradient(#c98a2b,#c98a2b);background-size:40px 2px;background-position:5px 38px;background-repeat:no-repeat}
.sel.run{background-color:#f2f7f9;background-size:50px 2px;background-position:0 38px}
.lang,.clock{display:flex;flex-direction:column;line-height:18px;padding-top:2px;letter-spacing:-.4px;white-space:nowrap}
.lang{width:37px;padding-left:7px}
.clock{width:63px;text-align:center}
```
